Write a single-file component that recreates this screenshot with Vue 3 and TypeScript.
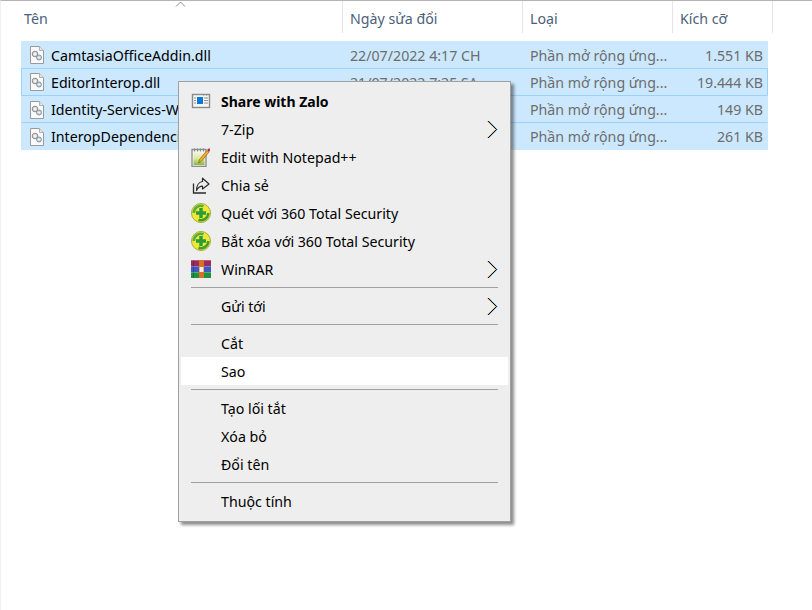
<script setup lang="ts">
interface FileRow {
  name: string;
  date: string;
  size: string;
  focused?: boolean;
}

interface MenuItem {
  label?: string;
  icon?: string;
  bold?: boolean;
  sub?: boolean;
  hover?: boolean;
  sep?: boolean;
}

const files: FileRow[] = [
  { name: 'CamtasiaOfficeAddin.dll', date: '22/07/2022 4:17 CH', size: '1.551 KB' },
  { name: 'EditorInterop.dll', date: '21/07/2022 7:25 SA', size: '19.444 KB', focused: true },
  { name: 'Identity-Services-Wrapper.dll', date: '21/07/2022 7:25 SA', size: '149 KB' },
  { name: 'InteropDependencies.dll', date: '21/07/2022 7:25 SA', size: '261 KB' },
];

const menu: MenuItem[] = [
  { label: 'Share with Zalo', icon: 'zalo', bold: true },
  { label: '7-Zip', sub: true },
  { label: 'Edit with Notepad++', icon: 'notepad' },
  { label: 'Chia sẻ', icon: 'share' },
  { label: 'Quét với 360 Total Security', icon: 'shield' },
  { label: 'Bắt xóa với 360 Total Security', icon: 'shield' },
  { label: 'WinRAR', icon: 'rar', sub: true },
  { sep: true },
  { label: 'Gửi tới', sub: true },
  { sep: true },
  { label: 'Cắt' },
  { label: 'Sao', hover: true },
  { sep: true },
  { label: 'Tạo lối tắt' },
  { label: 'Xóa bỏ' },
  { label: 'Đổi tên' },
  { sep: true },
  { label: 'Thuộc tính' },
];
</script>

<template>
  <div class="explorer">
    <div class="head">
      <div class="col col-name">Tên<svg class="sort" width="12" height="6" viewBox="0 0 12 6"><path d="M1 5.500 5.500 1 10 5.500" fill="none" stroke="#8c8c8c" /></svg></div>
      <div class="col col-date">Ngày sửa đổi</div>
      <div class="col col-type">Loại</div>
      <div class="col col-size">Kích cỡ</div>
    </div>

    <div class="list">
      <div v-for="f in files" :key="f.name" class="row" :class="{ focused: f.focused }">
        <div class="cell-name">
          <svg class="file-icon" width="16" height="18" viewBox="0 0 16 18">
            <path d="M1.500.5h9l4 4v13h-13z" fill="#fafafa" stroke="#9a9a9a" />
            <path d="M10.500.5v4h4" fill="#e8e8e8" stroke="#b0b0b0" />
            <circle cx="6" cy="8" r="2.800" fill="#dcdcdc" stroke="#8c8c8c" />
            <circle cx="10" cy="11.500" r="2.500" fill="#c6d8e6" stroke="#86939e" />
            <circle cx="6" cy="8" r=".9" fill="#fff" />
            <circle cx="10" cy="11.500" r=".8" fill="#fff" />
          </svg>
          <span class="fname">{{ f.name }}</span>
        </div>
        <div class="cell cell-date">{{ f.date }}</div>
        <div class="cell cell-type">Phần mở rộng ứng...</div>
        <div class="cell cell-size">{{ f.size }}</div>
      </div>
    </div>

    <div class="menu">
      <template v-for="(m, i) in menu" :key="i">
        <div v-if="m.sep" class="sep"></div>
        <div v-else class="item" :class="{ hover: m.hover, bold: m.bold }">
          <span class="ico">
            <svg v-if="m.icon === 'zalo'" width="20" height="16" viewBox="0 0 20 16">
              <rect x="1.500" y="1.500" width="17" height="13" fill="#f6f6f6" stroke="#8a8a8a" stroke-width="1.400" />
              <path d="M12 2.500h1M15 2.500h1" stroke="#b5b5b5" />
              <rect x="6" y="4" width="6" height="7" fill="#0a78d8" />
              <path d="M3 5h2M3 7.500h2M3 10h2M13 5h4M13 7.500h4M13 10h4" stroke="#8f8f8f" />
            </svg>
            <svg v-else-if="m.icon === 'notepad'" width="20" height="20" viewBox="0 0 20 20">
              <defs>
                <linearGradient id="pad" x1="0" y1="0" x2="0" y2="1">
                  <stop offset="0" stop-color="#f2f2da" />
                  <stop offset=".45" stop-color="#dfe89c" />
                  <stop offset="1" stop-color="#7fbb45" />
                </linearGradient>
              </defs>
              <path d="M1 2.500h14v17H1z" fill="#f2f2ea" stroke="#8c8c8c" stroke-width="1.300" />
              <path d="M2.500 6h11v12h-11z" fill="url(#pad)" />
              <path d="M3 1.500h1v3H3zM6 1.500h1v3H6zM9 1.500h1v3H9zM12 1.500h1v3h-1z" fill="#8a8a8a" />
              <path d="M7.500 16 8.500 12.500 16 3.500l2 1.600-7.500 9z" fill="#f3b024" stroke="#7a4a10" stroke-width=".6" />
              <path d="M16.300 2.500 18.500 1l.5 2.500-1 1.500z" fill="#b3262e" />
            </svg>
            <svg v-else-if="m.icon === 'share'" width="18" height="17" viewBox="0 0 18 17">
              <path d="M1.500 6.500v9.500h12.500" fill="none" stroke="#2b2b2b" stroke-width="1.300" />
              <path d="M10.500 1.200 17 7l-6.500 5V9.200C8 9.200 6 10.500 4.500 13.500 4.500 8.500 7 5 10.500 4.500z" fill="none" stroke="#2b2b2b" stroke-width="1.200" stroke-linejoin="round" />
            </svg>
            <svg v-else-if="m.icon === 'shield'" width="20" height="20" viewBox="0 0 20 20">
              <circle cx="10" cy="10" r="9.500" fill="#f1e836" stroke="#a5ab3c" />
              <path d="M1.500 10A8.500 8.500 0 0 1 13 2l-1 2.400A6 6 0 0 0 4 10z" fill="#55b040" />
              <path d="M18.500 10A8.500 8.500 0 0 1 7 18l1-2.400A6 6 0 0 0 16 10z" fill="#3f9e2e" />
              <path d="M8.300 5h3.400v3.300H15v3.400h-3.300V15H8.300v-3.300H5V8.300h3.300z" fill="#2a9c3a" />
            </svg>
            <svg v-else-if="m.icon === 'rar'" width="20" height="18" viewBox="0 0 20 18">
              <rect width="20" height="6" fill="#9c2a5c" />
              <rect y="6" width="20" height="6" fill="#4258c0" />
              <rect y="12" width="20" height="6" fill="#1f9144" />
              <path d="M0 .5h20M0 6.500h20M0 12.500h20" stroke="#fff" stroke-opacity=".25" />
              <path d="M2.500 0v18" stroke="#000" stroke-opacity=".2" />
              <rect x="8" width="5" height="18" fill="#d9702a" />
              <rect x="8.500" y="7" width="4" height="5" fill="#f8eedd" />
            </svg>
          </span>
          <span class="label">{{ m.label }}</span>
          <svg v-if="m.sub" class="chev" width="12" height="19" viewBox="0 0 12 19">
            <path d="M1 1l8.500 8.500L1 18" fill="none" stroke="#e08a20" stroke-width=".8" transform="translate(-.6 0)" />
            <path d="M1 1l8.500 8.500L1 18" fill="none" stroke="#1e90ff" stroke-width=".8" transform="translate(.6 0)" />
            <path d="M1 1l8.500 8.500L1 18" fill="none" stroke="#000" stroke-width=".9" />
          </svg>
        </div>
      </template>
    </div>
  </div>
</template>

<style scoped>
.explorer {
  position: relative;
  width: 812px;
  height: 610px;
  box-sizing: border-box;
  background: #fff;
  border-top: 1px solid #b4b4b4;
  border-left: 1px solid #f0f0f0;
  overflow: hidden;
  font-family: "Noto Sans", "Open Sans", sans-serif;
  font-size: 14.2px;
  color: #000;
}
.head {
  display: flex;
  height: 32px;
  color: #4c607a;
}
.col {
  position: relative;
  box-sizing: border-box;
  padding: 9px 0 0 7px;
  border-right: 1px solid #e5e5e5;
  line-height: 17px;
}
.col-name { width: 342px; padding-left: 23px; }
.col-date { width: 180px; }
.col-type { width: 150px; }
.col-size { width: 100px; }
.sort {
  position: absolute;
  left: 174px;
  top: 0;
}
.list {
  margin: 8px 0 0 20px;
  width: 747px;
}
.row {
  display: flex;
  align-items: center;
  box-sizing: border-box;
  height: 27.15px;
  background: #cce8ff;
  border-top: 1px solid #99d1ff;
  border-left: 1px solid #cce8ff;
  border-right: 1px solid #cce8ff;
  color: #6d6d6d;
}
.row:first-child { border-top-color: #cce8ff; }
.row:nth-child(n+3) { padding-top: 1px; }
.row.focused {
  border-left-color: #99d1ff;
  border-right-color: #99d1ff;
}
.cell-name {
  display: flex;
  align-items: center;
  width: 320px;
  flex: none;
  color: #000;
  padding-left: 7px;
  box-sizing: border-box;
}
.file-icon { flex: none; }
.fname { margin-left: 6px; white-space: nowrap; }
.cell { flex: none; box-sizing: border-box; white-space: nowrap; }
.cell-date { width: 180px; padding-left: 8px; }
.cell-type { width: 150px; padding-left: 8px; }
.cell-size { width: 95px; text-align: right; padding-right: 4px; }
.menu {
  position: absolute;
  left: 177px;
  top: 80px;
  box-sizing: border-box;
  width: 333px;
  height: 441px;
  padding: 5px 2px;
  background: #eeeeee;
  border: 1px solid #a0a0a0;
  box-shadow: 3px 3px 3px rgba(0, 0, 0, 0.45);
}
.item {
  position: relative;
  display: flex;
  align-items: center;
  height: 28px;
}
.item.hover { background: #fff; }
.item.bold { font-weight: 700; font-size: 14px; }
.ico {
  display: flex;
  align-items: center;
  justify-content: center;
  width: 40px;
  flex: none;
}
.label { white-space: nowrap; }
.chev {
  position: absolute;
  left: 306px;
  top: 5px;
}
.sep {
  height: 1px;
  margin: 4px 10px;
  background: #a0a0a0;
}
</style>

<style>
html, body { margin: 0; background: #fff; }
</style>
